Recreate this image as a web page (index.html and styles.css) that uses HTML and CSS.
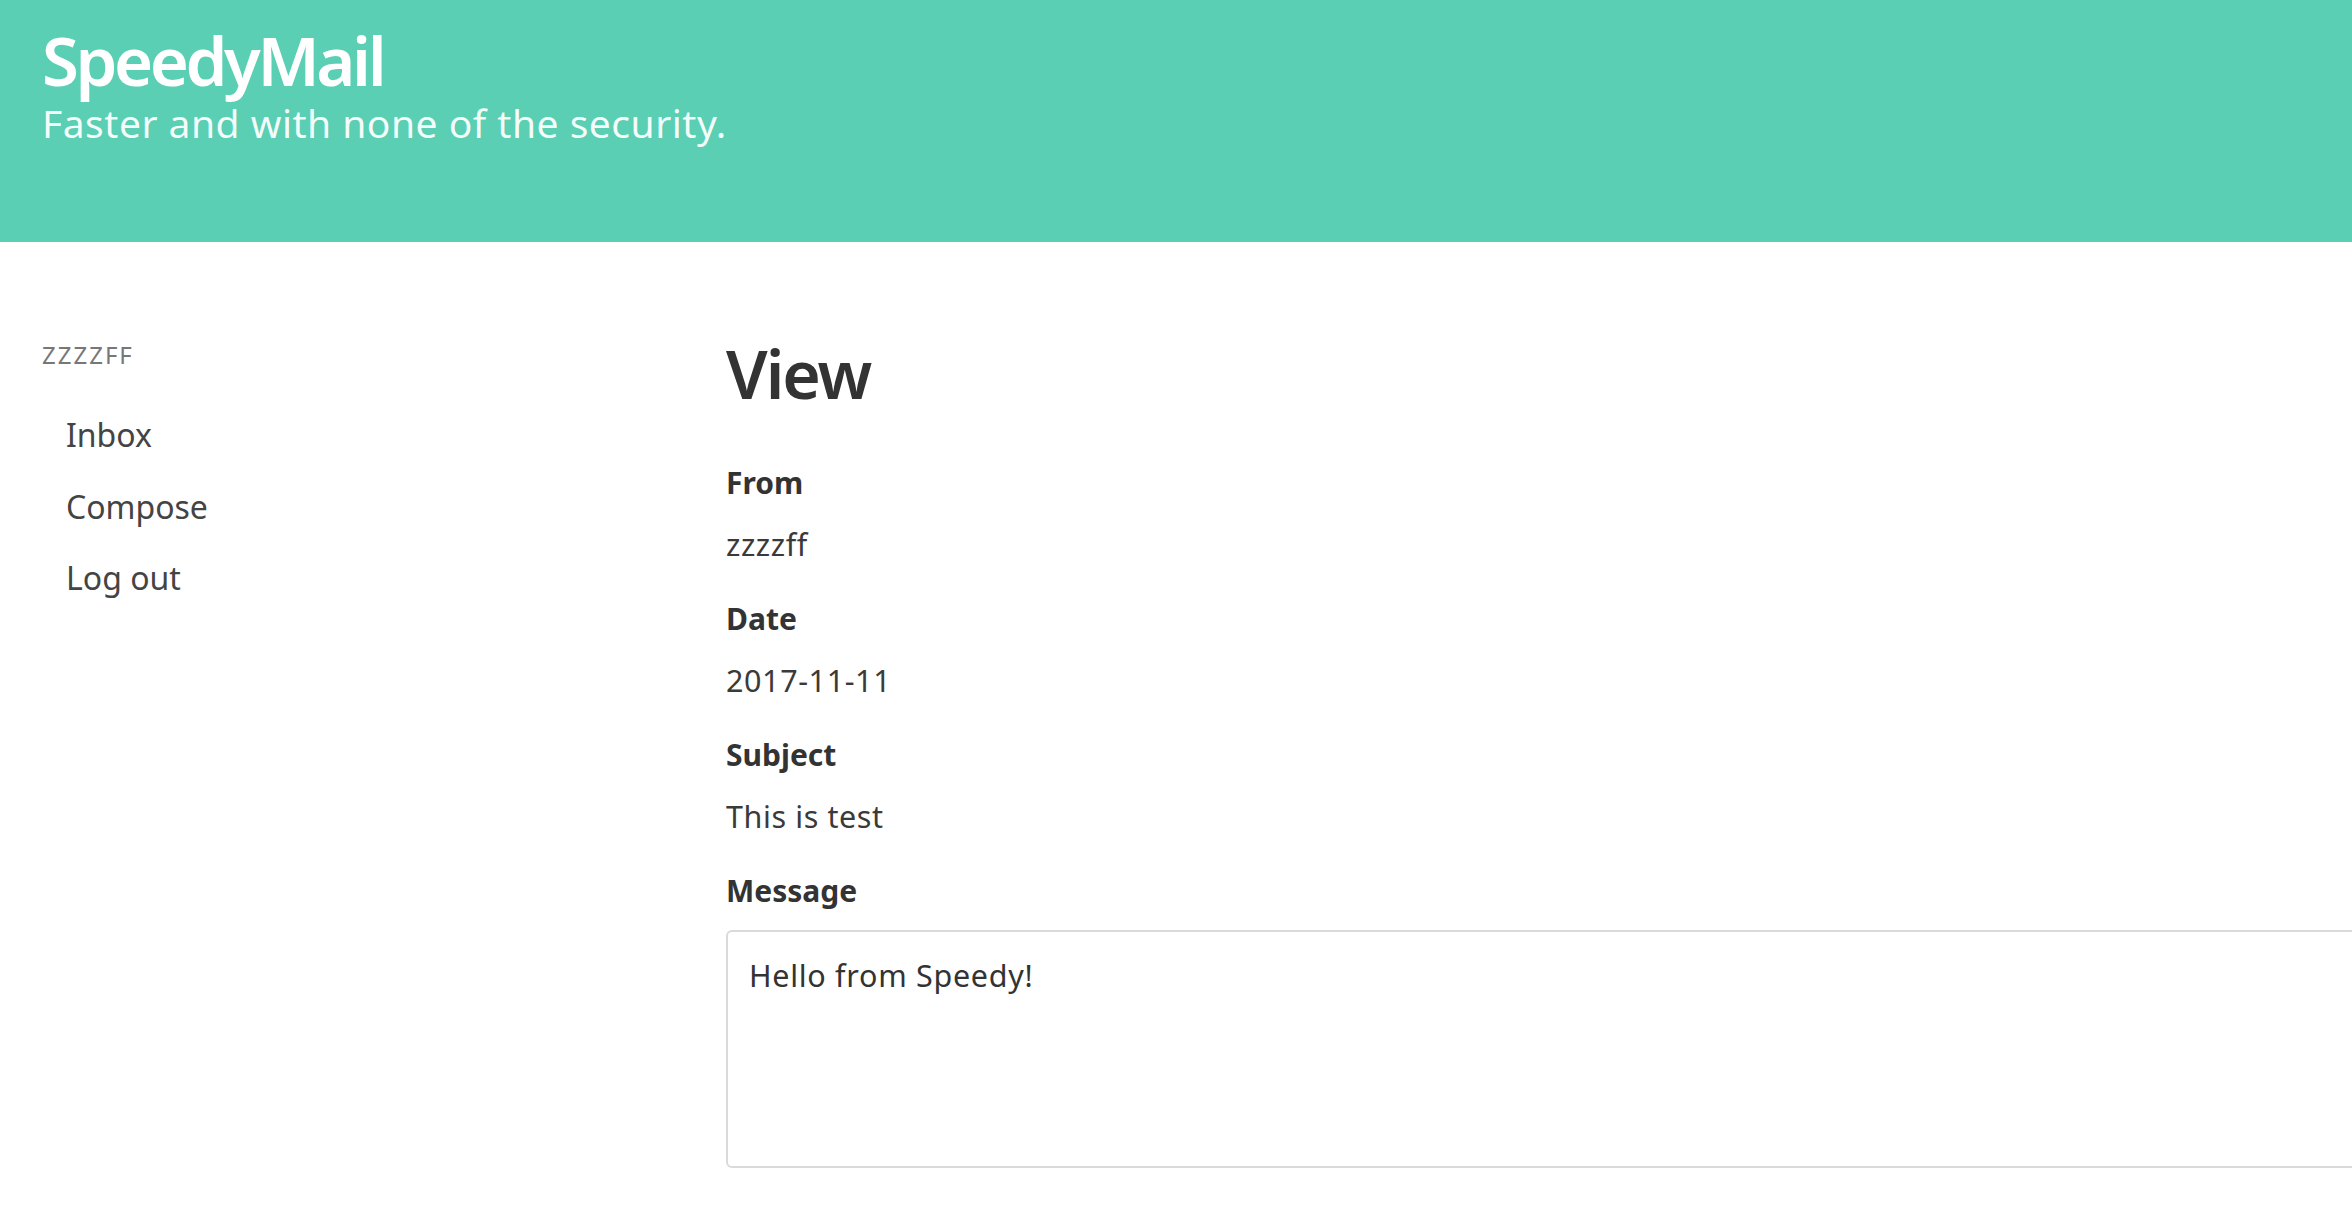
FILE: index.html
```html
<!DOCTYPE html>
<html lang="en">
<head>
<meta charset="utf-8">
<title>SpeedyMail - View</title>
<link rel="stylesheet" href="styles.css">
</head>
<body>
<header class="masthead">
  <div class="brand">SpeedyMail</div>
  <div class="tagline">Faster and with none of the security.</div>
</header>
<div class="layout">
  <aside class="sidebar">
    <div class="user">zzzzff</div>
    <nav class="nav">
      <a class="nav-item" href="#">Inbox</a>
      <a class="nav-item" href="#">Compose</a>
      <a class="nav-item" href="#">Log out</a>
    </nav>
  </aside>
  <main class="content">
    <h1 class="title">View</h1>
    <div class="field">
      <div class="label">From</div>
      <div class="value">zzzzff</div>
    </div>
    <div class="field">
      <div class="label">Date</div>
      <div class="value">2017-11-11</div>
    </div>
    <div class="field">
      <div class="label">Subject</div>
      <div class="value">This is test</div>
    </div>
    <div class="field">
      <div class="label">Message</div>
      <div class="message">Hello from Speedy!</div>
    </div>
  </main>
</div>
</body>
</html>
```

FILE: styles.css
```css
html, body {
  margin: 0;
  padding: 0;
  background: #ffffff;
  overflow: hidden;
}
body {
  font-family: "Noto Sans", "Open Sans", "DejaVu Sans", sans-serif;
  color: #333333;
}
.masthead {
  box-sizing: border-box;
  height: 242px;
  padding: 20px 42px 0 42px;
  background: #5bcfb3;
  color: #ffffff;
}
.brand {
  font-size: 67px;
  line-height: 80px;
  font-weight: 600;
  letter-spacing: -3.4px;
}
.tagline {
  font-size: 39px;
  line-height: 46px;
  font-weight: 400;
  letter-spacing: 0.5px;
  color: rgba(255, 255, 255, 0.94);
}
.layout {
  display: grid;
  grid-template-columns: 684px 1fr;
  padding-left: 42px;
}
.sidebar {
  padding-top: 95px;
}
.user {
  font-size: 24px;
  line-height: 36px;
  letter-spacing: 2px;
  text-transform: uppercase;
  color: #777777;
  margin-bottom: 26px;
}
.nav {
  display: flex;
  flex-direction: column;
}
.nav-item {
  display: block;
  padding: 12px 0 12px 24px;
  font-size: 32px;
  line-height: 47.5px;
  color: #444444;
  text-decoration: none;
}
.content {
  padding-top: 91px;
  min-width: 0;
}
.title {
  margin: 0 0 47px 0;
  font-size: 66px;
  line-height: 80px;
  font-weight: 600;
  letter-spacing: -2px;
  color: #333333;
}
.field {
  margin-bottom: 29px;
}
.label {
  font-size: 30px;
  line-height: 45px;
  font-weight: 700;
  color: #333333;
  margin-bottom: 17px;
}
.value {
  font-size: 30.5px;
  line-height: 45px;
  letter-spacing: 0.6px;
  color: #3a3a3a;
}
.message {
  width: 100%;
  height: 192px;
  padding: 21px;
  border: 2px solid #dadada;
  border-radius: 6px;
  font-size: 30.5px;
  line-height: 45px;
  letter-spacing: 0.7px;
  color: #333333;
}
```
